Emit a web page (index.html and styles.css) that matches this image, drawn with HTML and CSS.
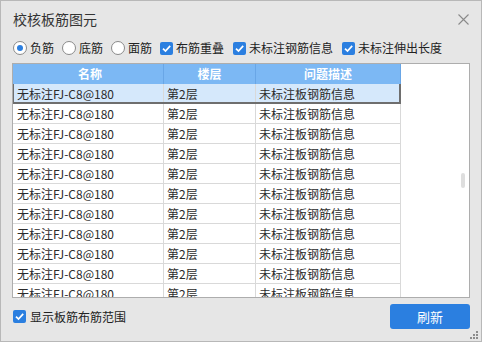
FILE: index.html
```html
<!DOCTYPE html>
<html lang="zh-CN">
<head>
    <meta charset="UTF-8">
    <title>校核板筋图元</title>
    <link rel="stylesheet" href="styles.css">
</head>
<body>
    <div class="titlebar">
        <span class="title">校核板筋图元</span>
        <svg class="close" width="11" height="11" viewBox="0 0 11 11">
            <path d="M0.5 0.5 L10.5 10.5 M10.5 0.5 L0.5 10.5" stroke="#8a8a8a" stroke-width="1.1" fill="none"/>
        </svg>
    </div>

    <div class="options">
        <label class="opt"><span class="radio on"></span>负筋</label>
        <label class="opt"><span class="radio"></span>底筋</label>
        <label class="opt"><span class="radio"></span>面筋</label>
        <label class="opt check">
            <svg class="box" width="13" height="13" viewBox="0 0 13 13"><rect width="13" height="13" rx="2" fill="#2b7fe0"/><path d="M3 6.6 L5.5 9.1 L10.2 3.9" stroke="#fff" stroke-width="1.7" fill="none"/></svg>布筋重叠
        </label>
        <label class="opt check">
            <svg class="box" width="13" height="13" viewBox="0 0 13 13"><rect width="13" height="13" rx="2" fill="#2b7fe0"/><path d="M3 6.6 L5.5 9.1 L10.2 3.9" stroke="#fff" stroke-width="1.7" fill="none"/></svg>未标注钢筋信息
        </label>
        <label class="opt check">
            <svg class="box" width="13" height="13" viewBox="0 0 13 13"><rect width="13" height="13" rx="2" fill="#2b7fe0"/><path d="M3 6.6 L5.5 9.1 L10.2 3.9" stroke="#fff" stroke-width="1.7" fill="none"/></svg>未标注伸出长度
        </label>
    </div>

    <div class="grid">
        <div class="grid-data">
            <div class="row head">
                <div class="cell">名称</div>
                <div class="cell">楼层</div>
                <div class="cell">问题描述</div>
            </div>
            <div class="row selected"><div class="cell">无标注FJ-C8@180</div><div class="cell">第2层</div><div class="cell">未标注板钢筋信息</div></div>
            <div class="row"><div class="cell">无标注FJ-C8@180</div><div class="cell">第2层</div><div class="cell">未标注板钢筋信息</div></div>
            <div class="row"><div class="cell">无标注FJ-C8@180</div><div class="cell">第2层</div><div class="cell">未标注板钢筋信息</div></div>
            <div class="row"><div class="cell">无标注FJ-C8@180</div><div class="cell">第2层</div><div class="cell">未标注板钢筋信息</div></div>
            <div class="row"><div class="cell">无标注FJ-C8@180</div><div class="cell">第2层</div><div class="cell">未标注板钢筋信息</div></div>
            <div class="row"><div class="cell">无标注FJ-C8@180</div><div class="cell">第2层</div><div class="cell">未标注板钢筋信息</div></div>
            <div class="row"><div class="cell">无标注FJ-C8@180</div><div class="cell">第2层</div><div class="cell">未标注板钢筋信息</div></div>
            <div class="row"><div class="cell">无标注FJ-C8@180</div><div class="cell">第2层</div><div class="cell">未标注板钢筋信息</div></div>
            <div class="row"><div class="cell">无标注FJ-C8@180</div><div class="cell">第2层</div><div class="cell">未标注板钢筋信息</div></div>
            <div class="row"><div class="cell">无标注FJ-C8@180</div><div class="cell">第2层</div><div class="cell">未标注板钢筋信息</div></div>
            <div class="row"><div class="cell">无标注FJ-C8@180</div><div class="cell">第2层</div><div class="cell">未标注板钢筋信息</div></div>
        </div>
        <div class="grid-rest">
            <div class="track"><div class="thumb"></div></div>
        </div>
    </div>

    <div class="footer">
        <label class="opt">
            <svg class="box" width="13" height="13" viewBox="0 0 13 13"><rect width="13" height="13" rx="2" fill="#2b7fe0"/><path d="M3 6.6 L5.5 9.1 L10.2 3.9" stroke="#fff" stroke-width="1.7" fill="none"/></svg>显示板筋布筋范围
        </label>
        <button class="refresh">刷新</button>
    </div>

    <svg class="grip" width="9" height="9" viewBox="0 0 9 9">
        <rect x="6" y="0" width="2" height="2" fill="#8c8c8c"/>
        <rect x="3" y="3" width="2" height="2" fill="#8c8c8c"/>
        <rect x="6" y="3" width="2" height="2" fill="#8c8c8c"/>
        <rect x="0" y="6" width="2" height="2" fill="#8c8c8c"/>
        <rect x="3" y="6" width="2" height="2" fill="#8c8c8c"/>
        <rect x="6" y="6" width="2" height="2" fill="#8c8c8c"/>
    </svg>
</body>
</html>
```

FILE: styles.css
```css
html, body {
    margin: 0;
    height: 100%;
}

body {
    box-sizing: border-box;
    width: 482px;
    height: 342px;
    border: 1px solid #b8b8b8;
    background: #e6e6e6;
    font-family: "Noto Sans CJK SC", sans-serif;
    font-size: 12px;
    color: #222;
    padding: 0 11px;
    position: relative;
    overflow: hidden;
}

.titlebar {
    height: 36px;
    display: flex;
    align-items: center;
    justify-content: space-between;
}

.title {
    font-size: 14px;
    color: #333;
    margin-left: 1px;
}

.close {
    margin-right: 1px;
}

.options {
    height: 16px;
    margin-top: 3px;
    display: flex;
    align-items: center;
    padding-left: 1px;
}

.opt {
    display: flex;
    align-items: center;
    gap: 3px;
    margin-right: 8px;
    line-height: 16px;
    white-space: nowrap;
}

.opt.check {
    margin-right: 9px;
}

.radio {
    box-sizing: border-box;
    width: 14px;
    height: 14px;
    border: 1px solid #8a8a8a;
    border-radius: 50%;
    background: #fff;
    display: flex;
    align-items: center;
    justify-content: center;
}

.radio.on::before {
    content: "";
    width: 6px;
    height: 6px;
    border-radius: 50%;
    background: #2b7fe0;
}

.grid {
    box-sizing: border-box;
    margin-top: 7px;
    height: 235px;
    border: 1px solid #adadad;
    background: #fff;
    display: flex;
}

.grid-data {
    width: 388px;
    overflow: hidden;
}

.row {
    display: grid;
    grid-template-columns: 151px 92px 145px;
    height: 20px;
    position: relative;
}

.cell {
    box-sizing: border-box;
    padding-left: 3px;
    line-height: 19px;
    border-right: 1px solid #d9d9d9;
    border-bottom: 1px solid #d9d9d9;
    color: #2b2b2b;
    white-space: nowrap;
    overflow: hidden;
}

.row .cell:first-child {
    padding-left: 4px;
}

.row.head {
    background: #7cb8f4;
}

.head .cell {
    text-align: center;
    padding-left: 0;
    color: #fff;
    font-weight: bold;
    line-height: 20px;
    border-bottom: none;
    border-right-color: #69a6e6;
}

.row.selected {
    background: #d5e8fb;
}

.row.selected::after {
    content: "";
    position: absolute;
    inset: 0;
    border-left: 1px solid #6e6e6e;
    border-right: 2px solid #6e6e6e;
    border-bottom: 2px solid #6e6e6e;
}

.grid-rest {
    flex: 1;
    display: flex;
    justify-content: flex-end;
}

.track {
    width: 11px;
}

.thumb {
    width: 4px;
    height: 15px;
    margin: 109px 0 0 3px;
    border-radius: 2px;
    background: #dedede;
}

.footer {
    margin-top: 6px;
    height: 25px;
    display: flex;
    align-items: center;
    justify-content: space-between;
    padding-left: 1px;
}

.footer .opt {
    gap: 4px;
}

.refresh {
    width: 80px;
    height: 25px;
    border: none;
    border-radius: 3px;
    background: #2b7fe0;
    color: #fff;
    font-family: "Noto Sans CJK SC", sans-serif;
    font-size: 13px;
    padding: 0;
}

.grip {
    position: absolute;
    right: 2px;
    bottom: 1px;
}
```
